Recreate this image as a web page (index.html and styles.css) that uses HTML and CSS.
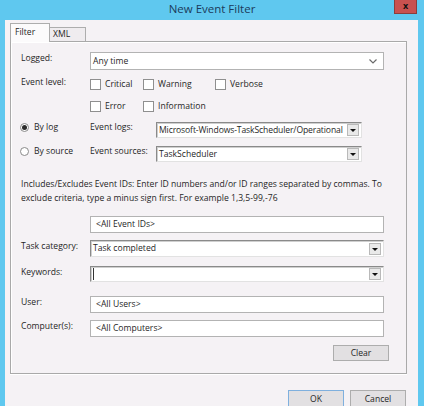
FILE: index.html
```html
<!DOCTYPE html>
<html>
<head>
<meta charset="utf-8">
<title>New Event Filter</title>
<link rel="stylesheet" href="styles.css">
</head>
<body>
<div class="window">
  <div class="titlebar">
    <div class="title">New Event Filter</div>
    <div class="close">x</div>
  </div>
  <div class="client">
    <div class="tabs">
      <div class="tab active">Filter</div>
      <div class="tab">XML</div>
    </div>
    <div class="panel">
      <div class="row row-logged">
        <div class="label">Logged:</div>
        <div class="select">
          <span class="val">Any time</span>
          <svg class="chev" width="8" height="5" viewBox="0 0 8 5"><polyline points="0.5,0.5 4,4 7.5,0.5" fill="none" stroke="#6a6a6a" stroke-width="1.2"/></svg>
        </div>
      </div>
      <div class="row row-level">
        <div class="label label-level">Event level:</div>
        <div class="checks">
          <div class="check"><span class="box"></span>Critical</div>
          <div class="check"><span class="box"></span>Warning</div>
          <div class="check"><span class="box"></span>Verbose</div>
          <div class="check"><span class="box"></span>Error</div>
          <div class="check"><span class="box"></span>Information</div>
        </div>
      </div>
      <div class="row row-bylog">
        <div class="radio-col"><span class="radio checked"></span>By log</div>
        <div class="label2">Event logs:</div>
        <div class="combo short"><span class="val tight">Microsoft-Windows-TaskScheduler/Operational</span><span class="dd"></span></div>
      </div>
      <div class="row row-bysource">
        <div class="radio-col"><span class="radio"></span>By source</div>
        <div class="label2">Event sources:</div>
        <div class="combo short"><span class="val">TaskScheduler</span><span class="dd"></span></div>
      </div>
      <p class="note">Includes/Excludes Event IDs: Enter ID numbers and/or ID ranges separated by commas. To<br>exclude criteria, type a minus sign first. For example 1,3,5-99,-76</p>
      <div class="row row-ids">
        <div class="label"></div>
        <div class="input">&lt;All Event IDs&gt;</div>
      </div>
      <div class="row row-task">
        <div class="label">Task category:</div>
        <div class="combo long"><span class="val">Task completed</span><span class="dd"></span></div>
      </div>
      <div class="row row-keywords">
        <div class="label">Keywords:</div>
        <div class="combo long kw"><span class="caret"></span><span class="val"></span><span class="dd"></span></div>
      </div>
      <div class="row row-user">
        <div class="label">User:</div>
        <div class="input">&lt;All Users&gt;</div>
      </div>
      <div class="row row-computer">
        <div class="label">Computer(s):</div>
        <div class="input">&lt;All Computers&gt;</div>
      </div>
      <div class="clear-row"><div class="btn">Clear</div></div>
    </div>
    <div class="actions">
      <div class="btn ok">OK</div>
      <div class="btn">Cancel</div>
    </div>
  </div>
</div>
</body>
</html>
```
FILE: styles.css
```css
* { box-sizing: border-box; }
html, body { margin: 0; padding: 0; }
body {
  background: #5fc8ef;
  font-family: "Open Sans", "Noto Sans", sans-serif;
  font-size: 8.6px;
  color: #1f1f1f;
  overflow: hidden;
}
.window {
  width: 424px;
  height: 406px;
  display: flex;
  flex-direction: column;
}
.titlebar {
  height: 20px;
  flex: none;
  display: grid;
  grid-template-columns: 1fr auto 1fr;
  align-items: start;
}
.title {
  grid-column: 2;
  font-size: 11.5px;
  line-height: 17px;
  color: #1c3b5b;
}
.close {
  grid-column: 3;
  justify-self: end;
  margin-right: 7px;
  width: 23px;
  height: 14px;
  background: #c9514f;
  border: 1px solid #8c3d3b;
  border-top: none;
  color: #111;
  font-weight: bold;
  font-size: 9px;
  line-height: 12px;
  text-align: center;
}
.client {
  flex: 1;
  margin: 0 6px 0 5px;
  background: #f5f2f5;
  padding: 3px 11px 0 5px;
  display: flex;
  flex-direction: column;
}
.tabs {
  height: 18px;
  display: flex;
  align-items: flex-end;
  position: relative;
  z-index: 1;
}
.tab {
  border: 1px solid #adadad;
  border-bottom: none;
  height: 14px;
  width: 37px;
  margin-left: -1px;
  padding-left: 3px;
  line-height: 12px;
  background: #efecef;
}
.tab.active {
  width: 40px;
  height: 19px;
  margin-left: 0;
  margin-bottom: -1px;
  padding-left: 4px;
  line-height: 17px;
  background: #fcfbfc;
  position: relative;
  z-index: 2;
}
.panel {
  width: 397px;
  border: 1px solid #a9a9a9;
  box-shadow: 0 1px 0 #ffffff, inset 1px 1px 0 #ffffff;
  padding: 10px 10px 12px 10px;
  display: flex;
  flex-direction: column;
}
.row {
  display: flex;
  align-items: flex-start;
}
.label {
  width: 69px;
  flex: none;
  line-height: 13px;
}
.label-level { margin-top: -2px; }
.select {
  width: 294px;
  height: 18px;
  background: #fff;
  border: 1px solid #b3b3b3;
  display: flex;
  align-items: center;
  justify-content: space-between;
  padding: 0 6px 0 2px;
}
.val { white-space: nowrap; }
.row-level { margin-top: 8px; }
.checks {
  display: grid;
  grid-template-columns: 53px 72px auto;
  grid-auto-rows: 12px;
  row-gap: 10px;
  margin-top: 0;
}
.check {
  display: flex;
  align-items: center;
  gap: 4px;
  line-height: 12px;
}
.box {
  width: 11px;
  height: 11px;
  background: #fff;
  border: 1px solid #8f8f8f;
  flex: none;
}
.row-bylog { margin-top: 10px; }
.row-bysource { margin-top: 8px; }
.radio-col {
  width: 69px;
  flex: none;
  display: flex;
  align-items: center;
  gap: 5px;
  margin-left: -1px;
  margin-right: 1px;
  line-height: 13px;
  margin-top: -1px;
}
.radio {
  width: 9px;
  height: 9px;
  border-radius: 50%;
  border: 1px solid #8a8a8a;
  background: #fff;
  flex: none;
  display: flex;
  align-items: center;
  justify-content: center;
}
.radio.checked::after {
  content: "";
  width: 5px;
  height: 5px;
  border-radius: 50%;
  background: #2b2b2b;
}
.label2 {
  width: 66px;
  flex: none;
  line-height: 13px;
  margin-top: -1px;
}
.combo {
  height: 16px;
  background: #fff;
  border: 1px solid;
  border-color: #8a8a8a #e2e2e2 #e2e2e2 #8a8a8a;
  box-shadow: inset 1px 1px 0 #cfcfcf;
  display: flex;
  align-items: center;
  padding: 0 1px 0 2px;
}
.combo.short { width: 206px; }
.combo.long { width: 294px; height: 17px; }
.combo .val {
  flex: 1;
  line-height: 13px;
}
.combo .val.tight { letter-spacing: -0.12px; }
.dd {
  width: 12px;
  height: 12px;
  flex: none;
  background: #e9e9e9;
  border: 1px solid #b9b9b9;
  margin-right: 1px;
  display: flex;
  align-items: center;
  justify-content: center;
}
.dd::after {
  content: "";
  width: 0;
  height: 0;
  border-left: 3px solid transparent;
  border-right: 3px solid transparent;
  border-top: 3px solid #111;
  margin-top: 1px;
}
.caret {
  width: 1px;
  height: 12px;
  background: #333;
  flex: none;
}
.note {
  margin: 15px 0 0 0;
  line-height: 14px;
  white-space: nowrap;
}
.row-ids { margin-top: 11px; }
.input {
  width: 294px;
  height: 17px;
  background: #fff;
  border: 1px solid #b3b3b3;
  padding: 0 5px;
  line-height: 15px;
  white-space: nowrap;
}
.row-task { margin-top: 7px; }
.row-keywords { margin-top: 9px; }
.row-keywords .combo { height: 16px; }
.row-user { margin-top: 14px; }
.row-computer { margin-top: 7px; }
.clear-row {
  display: flex;
  justify-content: flex-end;
  padding-right: 7px;
  margin-top: 8px;
}
.btn {
  width: 56px;
  height: 16px;
  background: #e2e0e2;
  border: 1px solid #adadad;
  text-align: center;
  line-height: 14px;
}
.actions {
  display: flex;
  justify-content: flex-end;
  gap: 6px;
  margin-top: 16px;
  padding-right: 1px;
}
.actions .btn { height: 21px; line-height: 16px; }
.btn.ok { border-color: #7fb0de; }
```
